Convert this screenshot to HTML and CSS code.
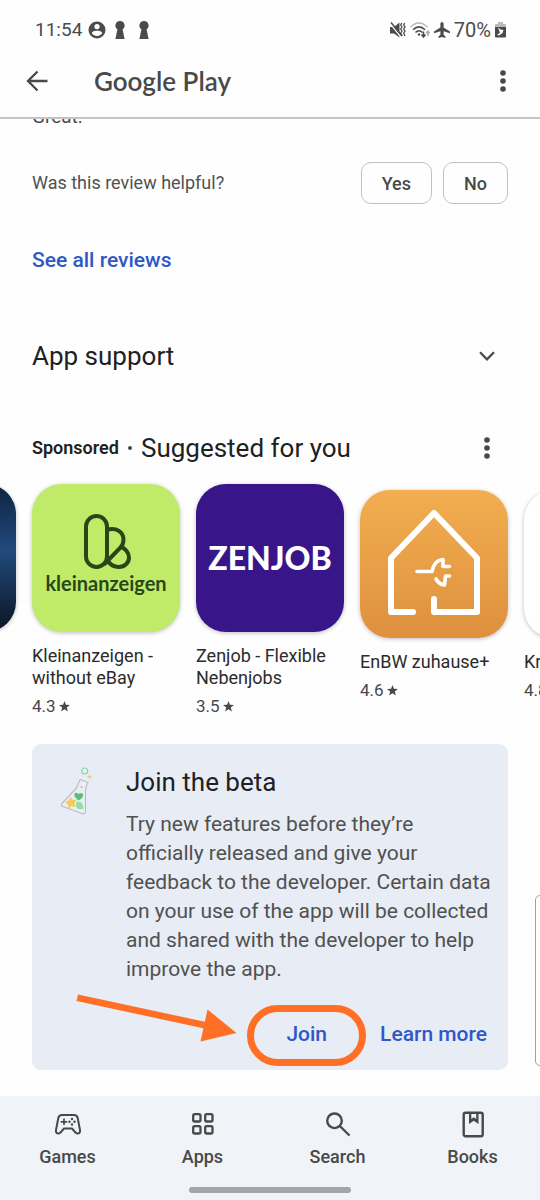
FILE: index.html
```html
<!DOCTYPE html>
<html lang="en">
<head>
<meta charset="utf-8">
<meta name="viewport" content="width=device-width, initial-scale=1">
<title>Google Play</title>
<link rel="stylesheet" href="styles.css">
</head>
<body>
<div class="screen">
  <header class="top">
    <div class="status">
      <div class="status-group status-left">
        <span>11:54</span>
        <svg class="s-account" width="18" height="18" viewBox="0 0 18 18"><circle cx="9" cy="9" r="8.500" fill="#4a4b4b"/><circle cx="9" cy="5.600" r="2.600" fill="#fff"/><path d="M3.800 11.800C5.200 9.200 12.800 9.200 14.200 11.800C13 16 5 16 3.800 11.800Z" fill="#fff"/></svg>
        <svg width="12" height="18" viewBox="0 0 12 18"><path d="M6 0a4.600 4.600 0 0 1 2.600 8.400L10.600 18H1.400L3.400 8.400A4.600 4.600 0 0 1 6 0Z" fill="#4a4b4b"/></svg>
        <svg width="12" height="18" viewBox="0 0 12 18"><path d="M6 0a4.600 4.600 0 0 1 2.600 8.400L10.600 18H1.400L3.400 8.400A4.600 4.600 0 0 1 6 0Z" fill="#4a4b4b"/></svg>
      </div>
      <div class="status-group status-right">
        <svg width="16" height="16" viewBox="0 0 16 16"><path d="M0 5H4L9.500 .5V15.500L4 11.500H0Z" fill="#4a4b4b"/><path d="M0 1.500L10.500 14.500" stroke="#fefefe" stroke-width="1.200"/><path d="M1 .5L12 14" stroke="#4a4b4b" stroke-width="1.500"/><path d="M11.700 1l-1 2 1.300 2-1.300 2 1.300 2-1.300 2 1.300 3M14.700 1l-1 2 1.300 2-1.300 2 1.300 2-1.300 2 1.300 3" fill="none" stroke="#4a4b4b" stroke-width="1.300"/></svg>
        <svg width="20" height="16" viewBox="0 0 20 16"><g fill="none" stroke-width="1.500"><path d="M.5 5Q9 -3 17.500 5" stroke="#b7b7b7"/><path d="M3 7.800Q9 2 15 7.800M5.500 10.500Q9 6.800 12.500 10.500" stroke="#4a4b4b"/><path d="M13.500 9.500V15M11.500 12.500L13.500 15L15.500 12.500" stroke="#4a4b4b"/><path d="M18 14V9.500M16.300 11.200L18 9.200L19.700 11.200" stroke="#aaa"/></g><circle cx="9" cy="12.500" r="1.200" fill="#4a4b4b"/></svg>
        <svg width="16" height="16" viewBox="0 0 16 16"><path d="M8 0C9 0 9.600 1 9.600 2V5.500L16 9.500V11.200L9.600 9.200V12.800L11.500 14.500V16L8 15L4.500 16V14.500L6.400 12.800V9.200L0 11.200V9.500L6.400 5.500V2C6.400 1 7 0 8 0Z" fill="#4a4b4b"/></svg>
        <span>70%</span>
        <svg width="11" height="16" viewBox="0 0 11 16"><path d="M3 0H8V2H10Q11 2 11 3V5H0V3Q0 2 1 2H3Z" fill="#bababa"/><path d="M0 5H11V14.500Q11 15.500 10 15.500H1Q0 15.500 0 14.500Z" fill="#4a4b4b"/><path d="M3 5.500L5.500 7.500L8.500 8L7.500 11L4 13.500L2 12.500L5 11L4.500 9.500Z" fill="#fff"/></svg>
      </div>
    </div>
    <div class="appbar">
      <button class="icon-btn" type="button" aria-label="Back"><svg width="22" height="22" viewBox="0 0 22 22"><path d="M21.500 11H2M11.500 1.500L2 11L11.500 20.500" fill="none" stroke="#484949" stroke-width="2.300"/></svg></button>
      <h1 class="brand">Google Play</h1>
      <button class="icon-btn" type="button" aria-label="More options"><svg width="6" height="22" viewBox="0 0 6 22" fill="#484949"><circle cx="3" cy="3" r="2.800"/><circle cx="3" cy="11" r="2.800"/><circle cx="3" cy="19" r="2.800"/></svg></button>
    </div>
  </header>

  <main class="content">
    <p class="review">Great.</p>
    <div class="helpful">
      <p class="helpful-text">Was this review helpful?</p>
      <div class="helpful-actions">
        <button class="chip" type="button">Yes</button>
        <button class="chip" type="button">No</button>
      </div>
    </div>
    <a class="link see-all" href="#reviews">See all reviews</a>

    <section class="row support">
      <h2 class="heading">App support</h2>
      <button class="icon-btn" type="button" aria-label="Expand app support"><svg width="16" height="10" viewBox="0 0 16 10"><path d="M1 1.300L8 8.300L15 1.300" fill="none" stroke="#484949" stroke-width="2.300"/></svg></button>
    </section>

    <section>
      <div class="row suggested">
        <span class="sponsored">Sponsored</span><span class="dot"></span>
        <h2 class="heading">Suggested for you</h2>
        <button class="icon-btn" type="button" aria-label="More suggestions"><svg width="6" height="22" viewBox="0 0 6 22" fill="#484949"><circle cx="3" cy="3" r="2.800"/><circle cx="3" cy="11" r="2.800"/><circle cx="3" cy="19" r="2.800"/></svg></button>
      </div>
      <div class="carousel">
        <article class="app"><div class="tile tile-night"></div></article>
        <article class="app">
          <div class="tile tile-klein">
            <svg width="50" height="56" viewBox="-2 0 50 56" fill="none" stroke="#284718" stroke-width="4"><rect x="3" y="2" width="21" height="51" rx="10.500"/><path d="M24 16C33 13 40.500 18 40.500 25.500C40.500 29 39.500 31.500 37.500 33.500L21 50.500M37.500 32.500C42 34 46 38.500 46 43.500C46 49 41.500 53 36 53C30.500 53 26.500 50.500 24 45.500"/></svg>
            <span class="klein-name">kleinanzeigen</span>
          </div>
          <p class="app-title">Kleinanzeigen - without eBay</p>
          <p class="rating">4.3<svg class="star" width="11" height="11" viewBox="0 0 24 24"><path d="M12 0l3.100 8.400 8.900.3-7 5.500 2.400 8.800L12 18l-7.400 5L7 14.200 0 8.700l8.900-.3z"/></svg></p>
        </article>
        <article class="app">
          <div class="tile tile-zen"><span class="zen-name">ZENJOB</span></div>
          <p class="app-title">Zenjob - Flexible Nebenjobs</p>
          <p class="rating">3.5<svg class="star" width="11" height="11" viewBox="0 0 24 24"><path d="M12 0l3.100 8.400 8.900.3-7 5.500 2.400 8.800L12 18l-7.400 5L7 14.200 0 8.700l8.900-.3z"/></svg></p>
        </article>
        <article class="app app-short">
          <div class="tile tile-enbw">
            <svg width="148" height="148" viewBox="0 0 148 148" fill="none" stroke="#fff" stroke-linecap="round" stroke-linejoin="round"><path d="M53 122H31V68L74 23L117 68V122H74V109" stroke-width="6"/><path d="M57 81.500H72C73 75 77 70 83 69.500V76.500H89.500M76 89C78 92.500 80 94.500 84.500 95L85.500 86H89.500" stroke-width="3.600"/></svg>
          </div>
          <p class="app-title">EnBW zuhause+</p>
          <p class="rating">4.6<svg class="star" width="11" height="11" viewBox="0 0 24 24"><path d="M12 0l3.100 8.400 8.900.3-7 5.500 2.400 8.800L12 18l-7.400 5L7 14.200 0 8.700l8.900-.3z"/></svg></p>
        </article>
        <article class="app app-short">
          <div class="tile tile-blank"></div>
          <p class="app-title">Kr</p>
          <p class="rating">4.8</p>
        </article>
      </div>
    </section>

    <section class="beta">
      <svg class="flask" width="32" height="50" viewBox="0 0 32 50">
        <circle cx="24.700" cy="5" r="3" fill="none" stroke="#8bd6a0" stroke-width="1.200"/>
        <path d="M29.500 8l.8 2 2 .8-2 .8-.8 2-.8-2-2-.8 2-.8z" fill="#f8c95a"/>
        <path d="M20 13.500L28 16.500L26.800 18.500L25.500 24V45Q25.500 48.500 22.500 47.800L3 40.500Q.5 39.500 2 37.500L16 22.500L19.300 15.500Z" fill="#e9edf4" stroke="#b9bdc3" stroke-width="1.100" stroke-linejoin="round"/>
        <circle cx="21.500" cy="21" r="1" fill="#b9bdc3"/>
        <path d="M18.600 34.500C11 29.500 15 24.500 18.700 28C22.500 24.500 26.500 30 18.600 34.500Z" fill="#60bd78"/>
        <path d="M10.500 31.500l1.900 2.900 3.500-.1-2.100 2.900 1.200 3.400-3.400-1.100-2.900 2.100-.1-3.500-2.900-2 3.400-1.200z" fill="#f8c95a" stroke="#f8c95a" stroke-width="1" stroke-linejoin="round"/>
        <path d="M16 36.500Q20 34.500 22.500 38Q23.500 40 23.500 43H18.500Q15.500 42 16 36.500Z" fill="#8fe0a3"/>
      </svg>
      <div class="beta-body">
        <h2 class="heading">Join the beta</h2>
        <p class="beta-text">Try new features before they’re officially released and give your feedback to the developer. Certain data on your use of the app will be collected and shared with the developer to help improve the app.</p>
        <div class="beta-actions">
          <button class="link join" type="button">Join</button>
          <a class="link" href="#beta">Learn more</a>
        </div>
      </div>
      <svg class="arrow" width="162" height="50" viewBox="0 0 162 50" fill="#ff6f26"><path d="M2 2.500L130 30L128.500 36.500L.5 9Z"/><path d="M131.500 17.500L160.500 41L124.500 49.500Z"/></svg>
    </section>
    <div class="edge-handle"></div>
  </main>

  <nav class="bottom">
    <div class="tabs">
      <a class="tab" href="#games"><svg width="28" height="28" viewBox="0 0 28 28" fill="none" stroke="#484949" stroke-width="2"><path d="M8 5H20Q23 5 23.700 8L26 20Q26.500 23.500 23.500 23.500Q22.500 23.500 21.500 22.500L18 18.500H10L6.500 22.500Q5.500 23.500 4.500 23.500Q1.500 23.500 2 20L4.300 8Q5 5 8 5Z"/><path d="M10 8.500V15M6.700 11.800H13.300" stroke-width="1.700"/><g fill="#484949" stroke="none"><circle cx="18" cy="9" r="1.200"/><circle cx="15.500" cy="11.800" r="1.200"/><circle cx="20.500" cy="11.800" r="1.200"/><circle cx="18" cy="14.500" r="1.200"/></g></svg><span>Games</span></a>
      <a class="tab" href="#apps"><svg width="28" height="28" viewBox="0 0 28 28" fill="none" stroke="#484949" stroke-width="2.300"><rect x="4.200" y="4.200" width="7.300" height="7.300" rx="1.500"/><rect x="16.200" y="4.200" width="7.300" height="7.300" rx="1.500"/><rect x="4.200" y="16.200" width="7.300" height="7.300" rx="1.500"/><rect x="16.200" y="16.200" width="7.300" height="7.300" rx="1.500"/></svg><span>Apps</span></a>
      <a class="tab" href="#search"><svg width="28" height="28" viewBox="0 0 28 28" fill="none" stroke="#484949" stroke-width="2.400"><circle cx="10.500" cy="10.800" r="7.300"/><path d="M15.800 16L25.500 25.500"/></svg><span>Search</span></a>
      <a class="tab" href="#books"><svg width="28" height="28" viewBox="0 0 28 28"><rect x="4.700" y="2.700" width="19" height="23.500" rx="1.800" fill="none" stroke="#484949" stroke-width="2.400"/><path d="M10 2H19.500V14L14.700 10.700L10 14Z" fill="#484949"/><path d="M12.300 4H17.200V9L14.700 7.300L12.300 9Z" fill="#f0f3f8"/></svg><span>Books</span></a>
    </div>
    <div class="home-bar"></div>
  </nav>
</div>
</body>
</html>
```

FILE: styles.css
```css
* { box-sizing: border-box; }
body {
  margin: 0;
  background: #fefefe;
  color: #202122;
  font-family: Roboto, "Liberation Sans", sans-serif;
}
h1, h2, p { margin: 0; font-weight: 400; }
button { padding: 0; border: 0; background: none; font: inherit; color: inherit; cursor: pointer; }
a { text-decoration: none; }
svg { display: block; flex: none; }

.screen { display: flex; flex-direction: column; min-height: 100vh; overflow: hidden; }

.top { position: relative; background: #fefefe; border-bottom: 2px solid #c4c5c5; }
.status {
  display: flex;
  justify-content: space-between;
  padding: 16px 34px 0 35px;
  font-size: 20px;
  line-height: 28px;
  color: #4a4b4b;
}
.status-group { display: flex; align-items: center; }
.status-left { gap: 12px; font-size: 19px; }
.s-account { margin: 0 -4px 0 -6px; }
.status-right { gap: 4px; }
.appbar { display: flex; align-items: center; height: 73px; padding: 0 16px; }
.icon-btn { display: flex; align-items: center; justify-content: center; width: 42px; height: 32px; flex: none; }
.brand { flex: 1; padding-left: 36px; font-family: Lato, sans-serif; font-size: 26px; line-height: 36px; font-weight: 600; color: #484949; }

.content { position: relative; flex: 1; overflow: hidden; padding: 0 32px 26px; }
.review { margin-top: -14px; font-size: 19px; line-height: 24px; color: #484949; }
.helpful { display: flex; align-items: center; justify-content: space-between; margin-top: 33px; }
.helpful-text { font-size: 18px; line-height: 24px; color: #505151; }
.helpful-actions { display: flex; gap: 11px; }
.chip {
  height: 42px;
  padding: 0 20px;
  border: 1px solid #bfc0c0;
  border-radius: 10px;
  font-size: 18px;
  font-weight: 500;
  color: #484949;
}
.link { font-size: 21px; line-height: 28px; font-weight: 500; color: #2f57c7; }
.see-all { display: block; width: fit-content; margin-top: 42px; }
.row { display: flex; align-items: center; }
.heading { font-size: 26px; line-height: 32px; color: #202122; }
.row .heading { flex: 1; }
.support { margin-top: 66px; }
.suggested { margin-top: 60px; }
.sponsored { font-size: 18px; line-height: 24px; font-weight: 600; }
.dot { width: 4px; height: 4px; margin: 0 9px; border-radius: 50%; background: #484949; }

.carousel { display: flex; gap: 16px; margin: 20px -32px 0; padding-left: 32px; }
.app { flex: none; width: 148px; }
.app:first-child { margin-left: -164px; }
.app-short { padding-top: 6px; }
.tile {
  display: flex;
  flex-direction: column;
  align-items: center;
  height: 148px;
  border-radius: 30px;
  box-shadow: 0 1px 4px #00000040;
  overflow: hidden;
}
.tile-night { background: linear-gradient(#0f2340, #214a7c 45%, #0b1420); }
.tile-klein { background: #c0eb68; padding-top: 30px; }
.klein-name { font-family: Lato, sans-serif; font-size: 20px; line-height: 26px; font-weight: 700; color: #284718; }
.tile-zen { background: #38168a; justify-content: center; }
.zen-name { font-family: Lato, sans-serif; font-size: 32px; line-height: 36px; font-weight: 900; color: #fff; }
.tile-enbw { background: linear-gradient(#f2ae50, #de903e); }
.tile-blank { background: #fff; }
.app-title { margin-top: 13px; font-size: 18px; line-height: 22px; color: #2a2b2b; }
.rating { display: flex; align-items: center; gap: 3px; margin-top: 7px; font-size: 17px; line-height: 20px; color: #484949; }
.star { fill: #484949; }

.beta {
  position: relative;
  display: flex;
  gap: 34px;
  margin-top: 28px;
  padding: 22px 12px 15px 28px;
  border-radius: 9px;
  background: #e8ecf4;
}
.beta-body { flex: 1; min-width: 0; }
.beta-text { margin-top: 12px; font-size: 21px; line-height: 29px; color: #505151; }
.beta-actions { display: flex; align-items: center; justify-content: flex-end; gap: 53px; height: 42px; margin-top: 29px; padding-right: 9px; }
.join { position: relative; }
.join::after {
  content: "";
  position: absolute;
  inset: -15px -39px -18px;
  border: 7px solid #ff6f26;
  border-radius: 31px;
}
.arrow { position: absolute; left: 44px; bottom: 28px; }
.edge-handle {
  position: absolute;
  right: -6px;
  bottom: 30px;
  width: 11px;
  height: 171px;
  border: 1px solid #a0a1a1;
  border-radius: 5px;
  background: #fefefe;
}

.bottom { background: #f0f3f8; padding: 14px 0 7px; }
.tabs { display: grid; grid-template-columns: repeat(4, 1fr); }
.tab {
  display: flex;
  flex-direction: column;
  align-items: center;
  gap: 7px;
  font-size: 18px;
  line-height: 24px;
  font-weight: 500;
  color: #484949;
}
.home-bar { width: 30%; height: 6px; margin: 18px auto 0; border-radius: 3px; background: #a4a5a9; }
```
